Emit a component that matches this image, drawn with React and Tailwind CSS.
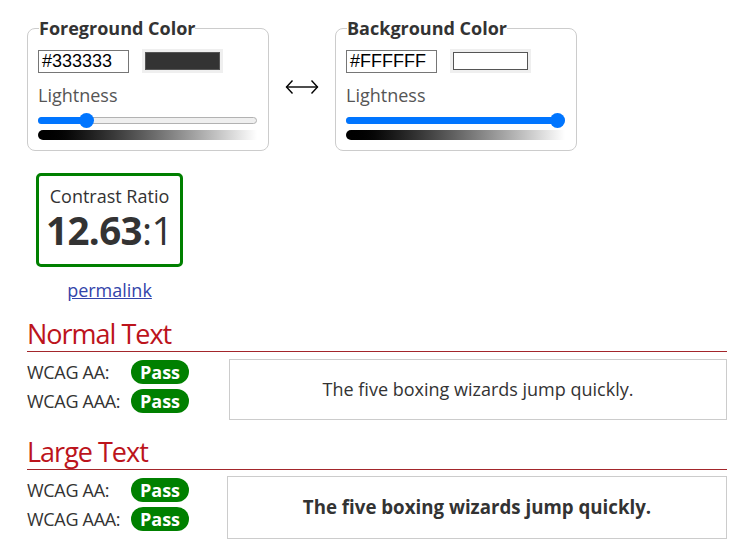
import React from "react";

const font = { fontFamily: '"Open Sans", "Noto Sans", sans-serif' };

function ColorPanel({ title, hex, swatch, thumbPct }) {
  return (
    <fieldset className="w-[242px] h-[134px] border border-[#cccccc] rounded-[8px] px-[10px] m-0">
      <legend className="text-[18px] leading-[23px] font-bold text-[#333333] ml-[1px]">{title}</legend>
      <div className="flex items-center mt-[9px]">
        <div className="w-[91px] h-[23px] border border-[#767676] flex items-center px-[3px] text-[18px] text-black" style={{ fontFamily: '"Liberation Sans", Arial, sans-serif' }}>
          {hex}
        </div>
        <div className="ml-[13px] w-[81px] h-[24px] bg-[#efefef] p-[3px]">
          <div className={`w-full h-full border border-[#555555] ${swatch}`}></div>
        </div>
      </div>
      <div className="mt-[10px] text-[18px] leading-[24px] text-[#555555]">Lightness</div>
      <div className="relative mt-[6px] h-[15px] w-[219px]">
        <div className="absolute left-0 right-0 top-[4px] h-[7px] rounded-full bg-[#efefef] border border-[#b2b2b2]"></div>
        <div className="absolute left-0 top-[4px] h-[7px] rounded-full bg-[#0075ff]" style={{ width: `calc(${thumbPct / 100} * 204px + 7px)` }}></div>
        <div className="absolute top-0 w-[15px] h-[15px] rounded-full bg-[#0075ff]" style={{ left: `calc(${thumbPct / 100} * 204px)` }}></div>
      </div>
      <div className="mt-[2px] w-[219px] h-[10px] rounded-l-full bg-gradient-to-r from-black to-white"></div>
    </fieldset>
  );
}

function Pass() {
  return (
    <span className="inline-flex items-center justify-center w-[58px] h-[24px] rounded-full bg-[#008000] text-white font-bold text-[18px] leading-[24px]">Pass</span>
  );
}

function Section({ title, bold, mt }) {
  return (
    <div className={mt}>
      <h2 className="text-[27px] leading-[34px] text-[#bc141c] border-b border-[#a3262b]" style={{ letterSpacing: "-1px" }}>{title}</h2>
      <div className="flex">
        <div className="w-[202px] flex flex-col gap-[5px] mt-[8px]">
          <div className="flex items-center h-[24px]"><span className="w-[104px] text-[18px] text-[#333333]" style={{ letterSpacing: "-0.3px" }}>WCAG AA:</span><Pass /></div>
          <div className="flex items-center h-[24px]"><span className="w-[104px] text-[18px] text-[#333333]" style={{ letterSpacing: "-0.3px" }}>WCAG AAA:</span><Pass /></div>
        </div>
        <div className={`flex-1 border border-[#cccccc] flex items-center justify-center ${bold ? "h-[63px] mt-[6px] text-[18.7px] font-bold -ml-[2px]" : "h-[61px] mt-[7px] text-[18px]"} text-[#333333]`}>
          The five boxing wizards jump quickly.
        </div>
      </div>
    </div>
  );
}

function Arrow() {
  return (
    <svg width="34" height="16" viewBox="0 0 34 16" className="mt-[6px]">
      <path d="M1.5 8 H32.5" stroke="#000" strokeWidth="1.4" fill="none" />
      <path d="M7.5 1.5 L1.5 8 L7.5 14.5" stroke="#000" strokeWidth="1.4" fill="none" />
      <path d="M26.5 1.5 L32.5 8 L26.5 14.5" stroke="#000" strokeWidth="1.4" fill="none" />
    </svg>
  );
}

export default function App() {
  return (
    <div className="w-[740px] h-[553px] bg-white overflow-hidden pl-[27px] pr-[13px] pt-[17px]" style={font}>
      <div className="flex items-center">
        <ColorPanel title="Foreground Color" hex="#333333" swatch="bg-[#333333]" thumbPct={20} />
        <div className="w-[66px] flex justify-center">
          <Arrow />
        </div>
        <ColorPanel title="Background Color" hex="#FFFFFF" swatch="bg-white" thumbPct={100} />
      </div>
      <div className="ml-[9px] mt-[22px] w-[147px] flex flex-col items-center">
        <div className="w-[147px] h-[94px] border-[3px] border-[#008000] rounded-[5px] flex flex-col items-center pt-[10px] text-[#333333]">
          <div className="text-[18px] leading-[20px]">Contrast Ratio</div>
          <div className="text-[38.5px] leading-[40px] mt-[4px]" style={{ letterSpacing: "-0.6px" }}><span className="font-bold">12.63</span>:1</div>
        </div>
        <a href="#" className="mt-[11px] text-[18px] leading-[24px] text-[#3344aa] underline">permalink</a>
      </div>
      <Section title="Normal Text" mt="mt-[15px]" />
      <Section title="Large Text" mt="mt-[15px]" bold />
    </div>
  );
}
